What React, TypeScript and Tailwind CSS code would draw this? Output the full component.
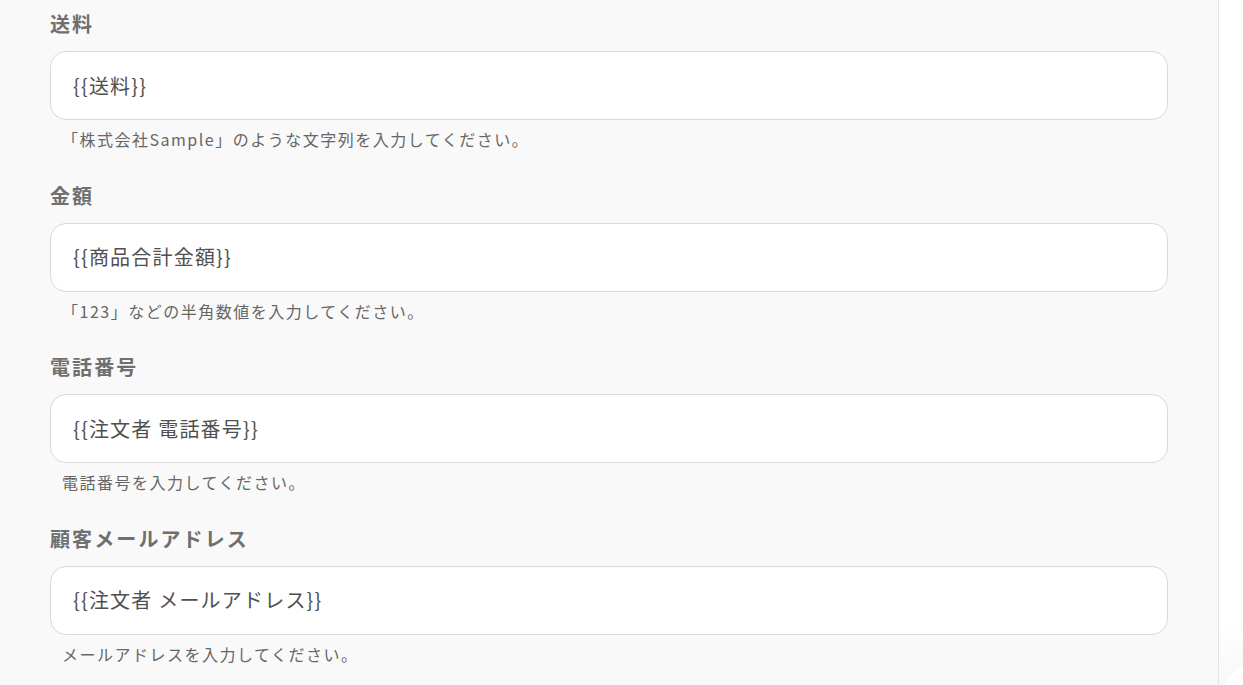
import React from 'react';

type Field = {
  label: string;
  value: string;
  hint: string;
};

const fields: Field[] = [
  { label: '送料', value: '{{送料}}', hint: '「株式会社Sample」のような文字列を入力してください。' },
  { label: '金額', value: '{{商品合計金額}}', hint: '「123」などの半角数値を入力してください。' },
  { label: '電話番号', value: '{{注文者 電話番号}}', hint: '電話番号を入力してください。' },
  { label: '顧客メールアドレス', value: '{{注文者 メールアドレス}}', hint: 'メールアドレスを入力してください。' },
];

export default function App(): React.ReactElement {
  return (
    <div
      className="w-[1243px] h-[685px] overflow-hidden flex bg-white"
      style={{ fontFamily: '"Noto Sans CJK JP", "Noto Sans", sans-serif' }}
    >
      {/* Form column */}
      <div className="w-[1218px] shrink-0 bg-[#f9f9f9] px-[50px] pt-[10px] flex flex-col gap-[30.5px]">
        {fields.map((f) => (
          <div key={f.label} className="flex flex-col">
            <label className="block h-[28px] leading-[28px] text-[20px] font-bold tracking-[2.1px] text-[#6f6f6f]">
              {f.label}
            </label>
            <div className="mt-[13px] h-[69px] rounded-[16px] border border-[#d6d9df] bg-white flex items-center pl-[22px]">
              <span className="text-[20px] tracking-[1.2px] text-[#505050]">{f.value}</span>
            </div>
            <p className="mt-[7px] pl-[12px] h-[24px] leading-[24px] text-[16px] tracking-[1.5px] text-[#666666]">
              {f.hint}
            </p>
          </div>
        ))}
      </div>

      {/* Right side panel edge */}
      <div className="relative flex-1 border-l border-[#e2e2e8] bg-white overflow-hidden">
        <div className="absolute -right-[40px] -bottom-[40px] w-[60px] h-[60px] rounded-full shadow-[0_0_40px_20px_rgba(0,0,0,0.035)]" />
      </div>
    </div>
  );
}
